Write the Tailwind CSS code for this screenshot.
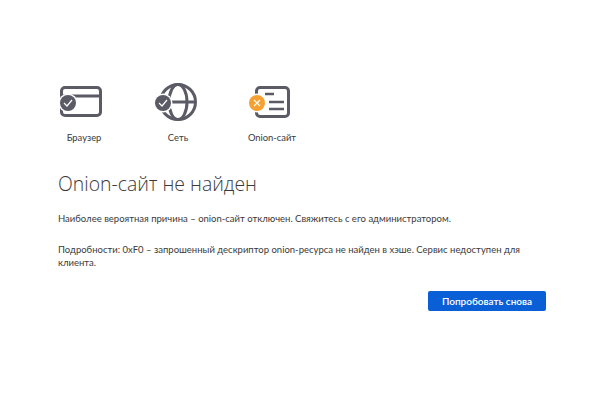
<!DOCTYPE html><html><head><meta charset="utf-8"><script src="https://cdn.jsdelivr.net/npm/@tailwindcss/browser@4"></script></head><body class="w-[600px] h-[400px] bg-white overflow-hidden font-['Lato','Noto_Sans',sans-serif] text-[#3a3a3a]">
<div class="pt-[82px]">
<div class="flex pl-[37px]">
<div class="w-[94px] flex flex-col items-center">
<svg width="60" height="40" viewBox="0 0 60 40" fill="none"><rect x="7.5" y="5.5" width="39" height="28" rx="3.5" stroke="#5b5b66" stroke-width="3"/><path d="M8 14H46" stroke="#5b5b66" stroke-width="3"/><circle cx="14" cy="21" r="9.5" fill="#fff"/><circle cx="14" cy="21" r="8" fill="#5b5b66"/><path d="M10 21l3 3 5-6" stroke="#fff" stroke-width="1.2"/></svg>
<span class="text-[9.4px] leading-[14px] mt-[9px]">Браузер</span></div>
<div class="w-[94px] flex flex-col items-center">
<svg width="60" height="40" viewBox="0 0 60 40" fill="none"><circle cx="30" cy="20" r="17.5" stroke="#5b5b66" stroke-width="3"/><ellipse cx="30" cy="20" rx="9" ry="17.5" stroke="#5b5b66" stroke-width="3"/><path d="M12 20H48" stroke="#5b5b66" stroke-width="3"/><circle cx="15" cy="21" r="9.5" fill="#fff"/><circle cx="15" cy="21" r="8" fill="#5b5b66"/><path d="M11 21l3 3 5-6" stroke="#fff" stroke-width="1.2"/></svg>
<span class="text-[9.4px] leading-[14px] mt-[9px]">Сеть</span></div>
<div class="w-[94px] flex flex-col items-center">
<svg width="60" height="40" viewBox="0 0 60 40" fill="none"><rect x="14.5" y="5.5" width="32" height="29" rx="3.5" stroke="#5b5b66" stroke-width="3"/><path d="M23 12H32M27 20H42M27 27H42" stroke="#5b5b66" stroke-width="2.5"/><circle cx="15" cy="21" r="9.5" fill="#fff"/><circle cx="15" cy="21" r="8" fill="#f5a030"/><path d="M12 18l6 6M18 18l-6 6" stroke="#fff" stroke-width="1.2"/></svg>
<span class="text-[9.4px] leading-[14px] mt-[9px]">Onion-сайт</span></div>
</div>
<div class="pl-[58px] pr-[54px]">
<h1 class="text-[19.4px] font-light leading-[28px] mt-[25px] font-['Open_Sans',sans-serif]">Onion-сайт не найден</h1>
<p class="text-[9.5px] leading-[13px] mt-[14px]">Наиболее вероятная причина – onion-сайт отключен. Свяжитесь с его администратором.</p>
<p class="text-[9.5px] leading-[13px] mt-[18px]">Подробности: 0xF0 – запрошенный дескриптор onion-ресурса не найден в хэше. Сервис недоступен для клиента.</p>
<div class="flex justify-end mt-[22px]"><button class="w-[118px] h-[20px] rounded-[2px] bg-[#0a5fd6] text-white text-[10px] font-semibold">Попробовать снова</button></div>
</div></div></body></html>
